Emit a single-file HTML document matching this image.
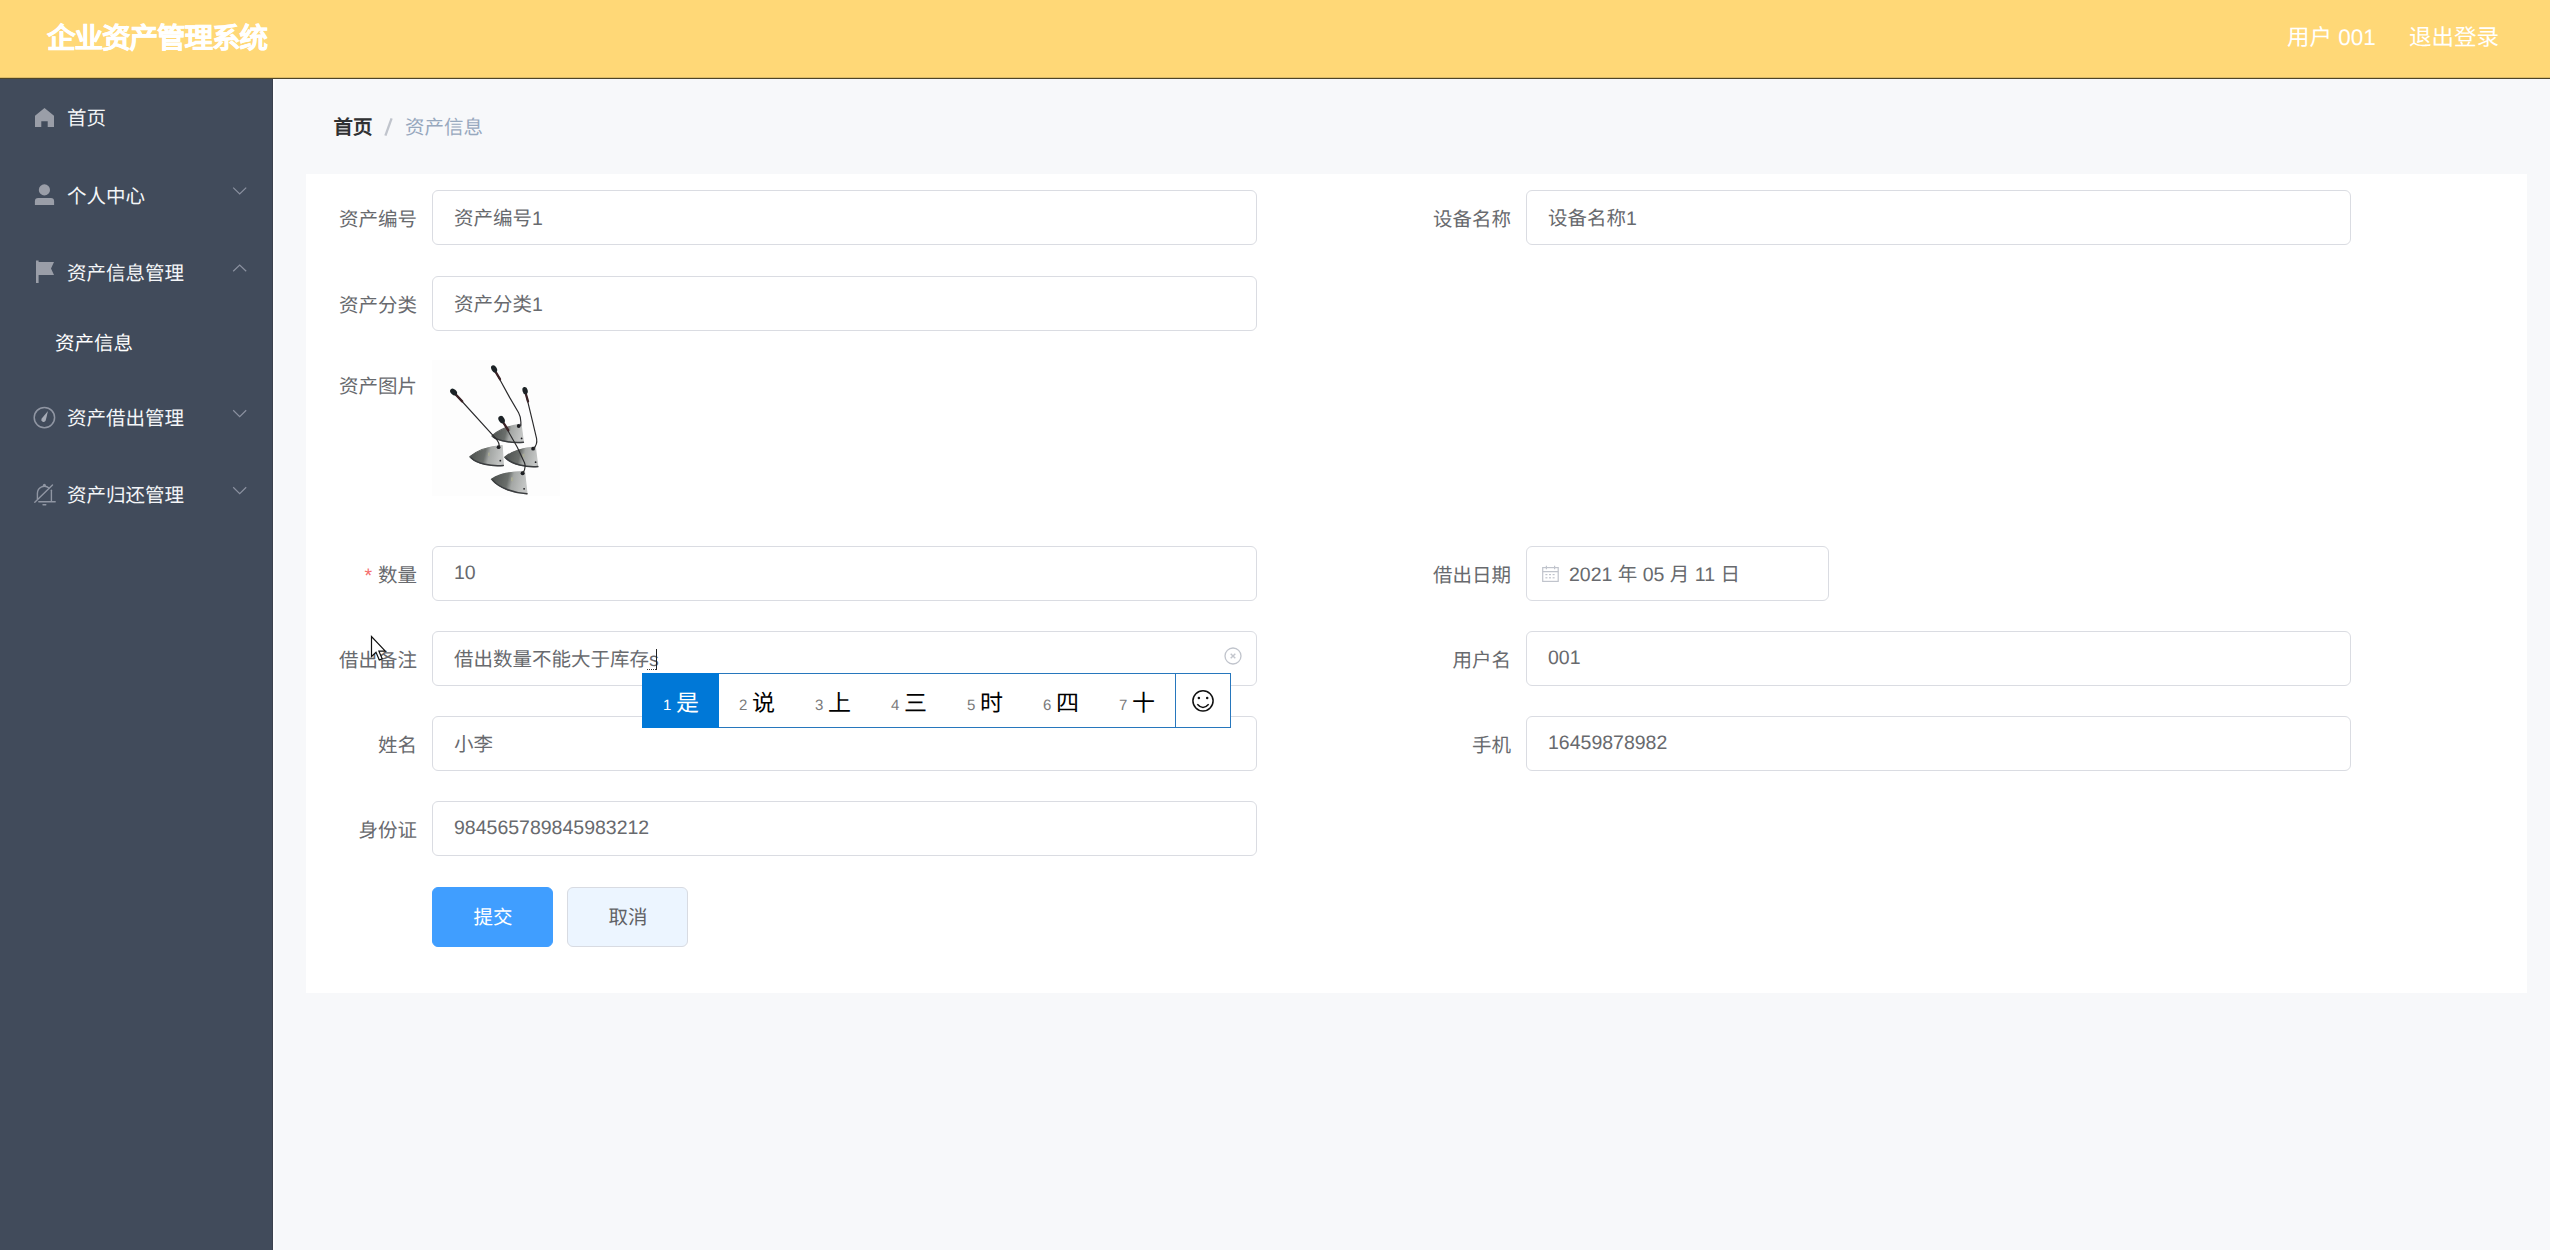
<!DOCTYPE html>
<html lang="zh-CN">
<head>
<meta charset="utf-8">
<title>企业资产管理系统</title>
<style>
*{box-sizing:border-box;margin:0;padding:0}
html,body{width:2550px;height:1250px;overflow:hidden;background:#f7f8fa;font-family:"Liberation Sans",sans-serif;}
body{position:relative;color:#606266;font-size:21px;text-rendering:geometricPrecision}
.abs{position:absolute}
#header{left:0;top:0;width:2550px;height:78px;background:#ffd877;}
#title{left:47px;top:1px;height:76px;line-height:76px;font-size:28.5px;letter-spacing:-1px;font-weight:bold;color:#fff;white-space:nowrap;-webkit-text-stroke:0.5px #fff}
.hr{top:1px;height:74px;line-height:74px;font-size:22.5px;color:#fff;white-space:nowrap}
#sidebar{left:0;top:79px;width:273px;height:1171px;background:#414b5b;border-right:1px solid #3b414e}
.mi{left:67px;height:40px;line-height:40px;font-size:19.5px;color:#f4f6f8;white-space:nowrap}
.arrow{left:232px;width:14px;height:8px}
#main{left:273px;top:79px;width:2277px;height:1171px;background:#f7f8fa;border-left:2px solid #fcfcfd}
#card{left:306px;top:174px;width:2221px;height:819px;background:#fff}
.lbl{width:200px;text-align:right;height:40px;line-height:40px;font-size:19.5px;color:#686a6e;white-space:nowrap}
.inp{height:55px;border:1px solid #dadce2;border-radius:6px;background:#fff;padding-left:21px;line-height:57px;overflow:hidden;font-size:19.5px;color:#686a6e;white-space:nowrap}
.btn{height:60px;line-height:60px;padding-left:1px;text-align:center;font-size:19.5px;border-radius:6px}

#ime .n{top:694px;height:24px;line-height:24px;font-size:15px;color:#7a7a7a}
#ime .c{top:685px;height:36px;line-height:36px;font-size:23px;color:#000}
</style>
</head>
<body>
<div id="header" class="abs"></div>
<div id="title" class="abs">企业资产管理系统</div>
<div class="abs hr" style="left:2287px">用户 001</div>
<div class="abs hr" style="left:2409px">退出登录</div>

<div id="sidebar" class="abs"></div>
<div id="main" class="abs"></div>
<div id="card" class="abs"></div>

<!-- sidebar menu -->
<div class="abs mi" style="top:99px">首页</div>
<div class="abs mi" style="top:177px">个人中心</div>
<div class="abs mi" style="top:254px">资产信息管理</div>
<div class="abs mi" style="top:324px;left:55px;color:#fff">资产信息</div>
<div class="abs mi" style="top:399px">资产借出管理</div>
<div class="abs mi" style="top:476px">资产归还管理</div>

<!-- breadcrumb -->
<div class="abs" style="left:333.5px;top:108px;height:40px;line-height:40px;font-size:19.5px;font-weight:bold;color:#303133">首页</div>
<svg class="abs" style="left:380px;top:114px" width="18" height="26" viewBox="380 114 18 26"><path d="M391.6,118.3 L385.4,135.7" stroke="#c0c4cc" stroke-width="2.3" fill="none"/></svg>
<div class="abs" style="left:405px;top:108px;height:40px;line-height:40px;font-size:19.5px;color:#97a8be">资产信息</div>

<!-- form left -->
<div class="abs lbl" style="left:217px;top:200px">资产编号</div>
<div class="abs inp" style="left:432px;top:190px;width:825px">资产编号1</div>
<div class="abs lbl" style="left:217px;top:286px">资产分类</div>
<div class="abs inp" style="left:432px;top:276px;width:825px">资产分类1</div>
<div class="abs lbl" style="left:217px;top:367px">资产图片</div>
<div class="abs lbl" style="left:217px;top:556px"><span style="color:#f56c6c;margin-right:6px">*</span>数量</div>
<div class="abs inp" style="left:432px;top:546px;width:825px;line-height:53px">10</div>
<div class="abs lbl" style="left:217px;top:641px">借出备注</div>
<div class="abs inp" style="left:432px;top:631px;width:825px">借出数量不能大于库存s</div>
<div class="abs lbl" style="left:217px;top:726px">姓名</div>
<div class="abs inp" style="left:432px;top:716px;width:825px">小李</div>
<div class="abs lbl" style="left:217px;top:811px">身份证</div>
<div class="abs inp" style="left:432px;top:801px;width:825px;line-height:53px">984565789845983212</div>

<!-- form right -->
<div class="abs lbl" style="left:1311px;top:200px">设备名称</div>
<div class="abs inp" style="left:1526px;top:190px;width:825px">设备名称1</div>
<div class="abs lbl" style="left:1311px;top:556px">借出日期</div>
<div class="abs inp" style="left:1526px;top:546px;width:303px;padding-left:42px">2021 年 05 月 11 日</div>
<div class="abs lbl" style="left:1311px;top:641px">用户名</div>
<div class="abs inp" style="left:1526px;top:631px;width:825px;line-height:53px">001</div>
<div class="abs lbl" style="left:1311px;top:726px">手机</div>
<div class="abs inp" style="left:1526px;top:716px;width:825px;line-height:53px">16459878982</div>

<!-- buttons -->
<div class="abs btn" style="left:432px;top:887px;width:121px;background:#409eff;color:#fff;border:1px solid #409eff">提交</div>
<div class="abs btn" style="left:567px;top:887px;width:121px;background:#ecf5ff;color:#606266;border:1px solid #d8dbe2">取消</div>

<!-- header line -->
<div class="abs" style="left:0;top:77px;width:2550px;height:1px;background:#dcbb67"></div>
<div class="abs" style="left:0;top:78px;width:2550px;height:1px;background:#4e4528"></div>

<!-- sidebar icons -->
<svg class="abs" style="left:0;top:78px" width="273" height="500" viewBox="0 78 273 500">
 <g fill="#9a9ea8">
  <path d="M35,127 V115.8 L44.5,108 L54,115.8 V127 H47.7 V121.2 H41.3 V127 Z"/>
  <circle cx="44.4" cy="189.9" r="5.6"/>
  <path d="M34.9,205.1 V201 a3.2,3.2 0 0 1 3.2,-3.1 H50.9 a3.2,3.2 0 0 1 3.2,3.1 V205.1 Z"/>
  <path d="M36,260.5 H38.6 V262 H54 L51,268.5 L54,275 H38.6 V283 H36 Z"/>
 </g>
 <g fill="none" stroke="#9096a3" stroke-width="1.5">
  <circle cx="44.4" cy="417.6" r="10.2"/>
 </g>
 <path d="M48,411.1 L45.7,420.6 a2.3,2.3 0 0 1 -4.2,-1.9 Z" fill="#a6abb6"/>
 <g fill="none" stroke="#9096a3" stroke-width="1.4" stroke-linecap="round">
  <path d="M37.4,499 V493.5 a7,7.4 0 0 1 11.6,-5.4"/>
  <path d="M51.4,490.2 V501.4"/>
  <path d="M38.8,501.7 H55.2"/>
  <path d="M52.5,485 L34.8,502.2"/>
  <path d="M43,504.7 H45.8"/>
 </g>
 <circle cx="44.4" cy="485.2" r="1.5" fill="#9096a3"/>
 <g fill="none" stroke="#8b91a0" stroke-width="1.2">
  <path d="M233.2,187.6 L239.7,194 L246.2,187.6"/>
  <path d="M233.2,271.3 L239.7,265 L246.2,271.3"/>
  <path d="M233.2,410.3 L239.7,416.7 L246.2,410.3"/>
  <path d="M233.2,487.3 L239.7,493.7 L246.2,487.3"/>
 </g>
</svg>

<!-- asset image (microphones) -->
<svg class="abs" style="left:432px;top:360px" width="128" height="136" viewBox="432 360 128 136">
 <rect x="432" y="360" width="128" height="136" fill="#fdfdfd"/>
 <defs>
  <linearGradient id="bs" x1="0" x2="1" y1="0" y2="0.15"><stop offset="0" stop-color="#474b49"/><stop offset="0.5" stop-color="#6b6f6c"/><stop offset="0.64" stop-color="#a4a7a5"/><stop offset="1" stop-color="#c3c5c4"/></linearGradient>
  <filter id="sf" x="-5%" y="-5%" width="110%" height="110%"><feGaussianBlur stdDeviation="0.55"/></filter>
 </defs>
 <g filter="url(#sf)">
  <!-- base A -->
  <path d="M491.9,436 C498,430 508,426 521,424.2 L523.4,442.4 C512,443.3 499,441.3 491.9,436 Z" fill="url(#bs)" stroke="url(#bs)" stroke-width="1.2" stroke-linejoin="round"/>
  <path d="M523.4,442.2 C512,443.1 499,441.1 493.4,437.2" fill="none" stroke="#3a3d3f" stroke-width="1.5" stroke-linecap="round"/>
  <!-- base B -->
  <path d="M469.8,456.8 C477,450.5 488,446.5 502.2,445.5 L503.3,465.6 C491,466.8 477,463.8 469.8,456.8 Z" fill="url(#bs)" stroke="url(#bs)" stroke-width="1.2" stroke-linejoin="round"/>
  <path d="M503.3,465.40000000000003 C491,466.6 477,463.6 471.3,458.0" fill="none" stroke="#3a3d3f" stroke-width="1.5" stroke-linecap="round"/>
  <!-- base C -->
  <path d="M504.7,457.2 C512,451 522,448 535.3,447 L537.8,466.8 C526,467.8 512,464.3 504.7,457.2 Z" fill="url(#bs)" stroke="url(#bs)" stroke-width="1.2" stroke-linejoin="round"/>
  <path d="M537.8,466.6 C526,467.6 512,464.1 506.2,458.4" fill="none" stroke="#3a3d3f" stroke-width="1.5" stroke-linecap="round"/>
  <!-- base D -->
  <path d="M491.4,479.2 C499,474 510,471.7 524.5,471.5 L527,494 C515,493.6 499,488.2 491.4,479.2 Z" fill="url(#bs)" stroke="url(#bs)" stroke-width="1.2" stroke-linejoin="round"/>
  <path d="M527,493.8 C515,493.40000000000003 499,488.0 492.9,480.4" fill="none" stroke="#3a3d3f" stroke-width="1.5" stroke-linecap="round"/>
  <!-- sockets + buttons + labels -->
  <g fill="#1d1e20">
   <circle cx="518.7" cy="426" r="1.9"/><circle cx="498.6" cy="447.2" r="1.9"/><circle cx="533.1" cy="448.7" r="1.9"/><circle cx="522.6" cy="473.2" r="2"/>
   <circle cx="521.6" cy="438.4" r="0.9"/><circle cx="500.3" cy="460.7" r="0.9"/><circle cx="535.6" cy="462.2" r="0.9"/><circle cx="524.1" cy="488.8" r="0.9"/>
  </g>
  <g fill="#a9ab96"><rect x="488" y="452.6" width="2" height="3.4"/><rect x="522.6" y="453.8" width="2" height="3.4"/><rect x="511" y="477.4" width="2.2" height="3.8"/></g>
  <!-- stems -->
  <g fill="none" stroke="#2a2a2c" stroke-width="1.15" stroke-linecap="round">
   <path d="M494.2,369.2 L509.6,397.4 L518.6,412.7 Q521.6,418.2 520.7,425.6"/>
   <path d="M453.5,392 L496.8,439.6 Q499.6,443 499.4,447"/>
   <path d="M525.2,391 L532.6,421.7 L536.6,438.6 Q537.6,444.6 533.6,448.4"/>
   <path d="M501.7,419.8 L517.3,447.3 L524.6,463 Q526.2,468.6 522.8,472.8"/>
  </g>
  <!-- necks -->
  <g fill="none" stroke="#3b2428" stroke-width="2.3" stroke-linecap="round">
   <path d="M495.6,371.8 L500,379.2"/>
   <path d="M455.6,394.4 L462.2,401.4"/>
   <path d="M525.8,393.8 L528,401.4"/>
   <path d="M503.2,422.4 L508.2,430.2"/>
  </g>
  <!-- heads -->
  <g fill="#1c2426">
   <ellipse cx="494.1" cy="368.9" rx="2.6" ry="3.9" transform="rotate(-30 494.1 368.9)"/>
   <ellipse cx="453.6" cy="392" rx="2.7" ry="4" transform="rotate(-45 453.6 392)"/>
   <ellipse cx="525.1" cy="390.6" rx="2.6" ry="3.7" transform="rotate(-14 525.1 390.6)"/>
   <ellipse cx="501.6" cy="419.6" rx="2.9" ry="4" transform="rotate(-30 501.6 419.6)"/>
  </g>
 </g>
</svg>

<!-- date icon -->
<svg class="abs" style="left:1541px;top:565px" width="18" height="18" viewBox="0 0 18 18">
 <g fill="none" stroke="#c0c4cc" stroke-width="1.2">
  <rect x="1.7" y="2.6" width="15.5" height="13.8"/>
  <path d="M1.7,6.6 H17.2 M5.4,0.8 V4.2 M13.6,0.8 V4.2"/>
 </g>
 <g fill="#c0c4cc"><rect x="4.4" y="9" width="2" height="1.2"/><rect x="8" y="9" width="2" height="1.2"/><rect x="11.6" y="9" width="2" height="1.2"/><rect x="4.4" y="12.2" width="2" height="1.2"/><rect x="8" y="12.2" width="2" height="1.2"/><rect x="11.6" y="12.2" width="2" height="1.2"/></g>
</svg>

<!-- clear icon -->
<svg class="abs" style="left:1223px;top:646px" width="20" height="20" viewBox="0 0 20 20">
 <circle cx="10" cy="10" r="8" fill="none" stroke="#c0c4cc" stroke-width="1.3"/>
 <path d="M7.7,7.7 L12.3,12.3 M12.3,7.7 L7.7,12.3" stroke="#c3c6cd" stroke-width="1.4" fill="none"/>
</svg>

<!-- text caret + IME underline -->
<div class="abs" style="left:656px;top:649px;width:1px;height:21px;background:#222"></div>
<div class="abs" style="left:647px;top:669px;width:9px;height:0;border-top:1px dotted #333"></div>

<!-- IME candidate bar -->
<div class="abs" style="left:642px;top:673px;width:589px;height:55px;background:#fff;border:1px solid #2777bd"></div>
<div class="abs" style="left:642px;top:673px;width:77px;height:55px;background:#0078d7"></div>
<div class="abs" style="left:1175px;top:673px;width:1px;height:55px;background:#2777bd"></div>
<div id="ime">
 <span class="abs n" style="left:663px;color:#fff">1</span><span class="abs c" style="left:676px;color:#fff">是</span>
 <span class="abs n" style="left:739px">2</span><span class="abs c" style="left:752px">说</span>
 <span class="abs n" style="left:815px">3</span><span class="abs c" style="left:828px">上</span>
 <span class="abs n" style="left:891px">4</span><span class="abs c" style="left:904px">三</span>
 <span class="abs n" style="left:967px">5</span><span class="abs c" style="left:980px">时</span>
 <span class="abs n" style="left:1043px">6</span><span class="abs c" style="left:1056px">四</span>
 <span class="abs n" style="left:1119px">7</span><span class="abs c" style="left:1132px">十</span>
</div>
<svg class="abs" style="left:1190px;top:688px" width="26" height="26" viewBox="0 0 26 26">
 <circle cx="13" cy="12.8" r="10.1" fill="none" stroke="#111" stroke-width="1.5"/>
 <circle cx="8.9" cy="10" r="1.25" fill="#111"/><circle cx="17.2" cy="10" r="1.25" fill="#111"/>
 <path d="M7.3,16.2 Q13,22.6 18.7,16.2" fill="none" stroke="#111" stroke-width="1.5"/>
</svg>

<!-- mouse cursor -->
<svg class="abs" style="left:369px;top:634px" width="22" height="30" viewBox="0 0 22 30">
 <path d="M2.5,2.5 V22.5 L7,18.3 L10.3,26 L13.2,24.7 L9.9,17.2 H16.3 Z" fill="#fff" stroke="#111" stroke-width="1.2" stroke-linejoin="miter"/>
</svg>

</body>
</html>
